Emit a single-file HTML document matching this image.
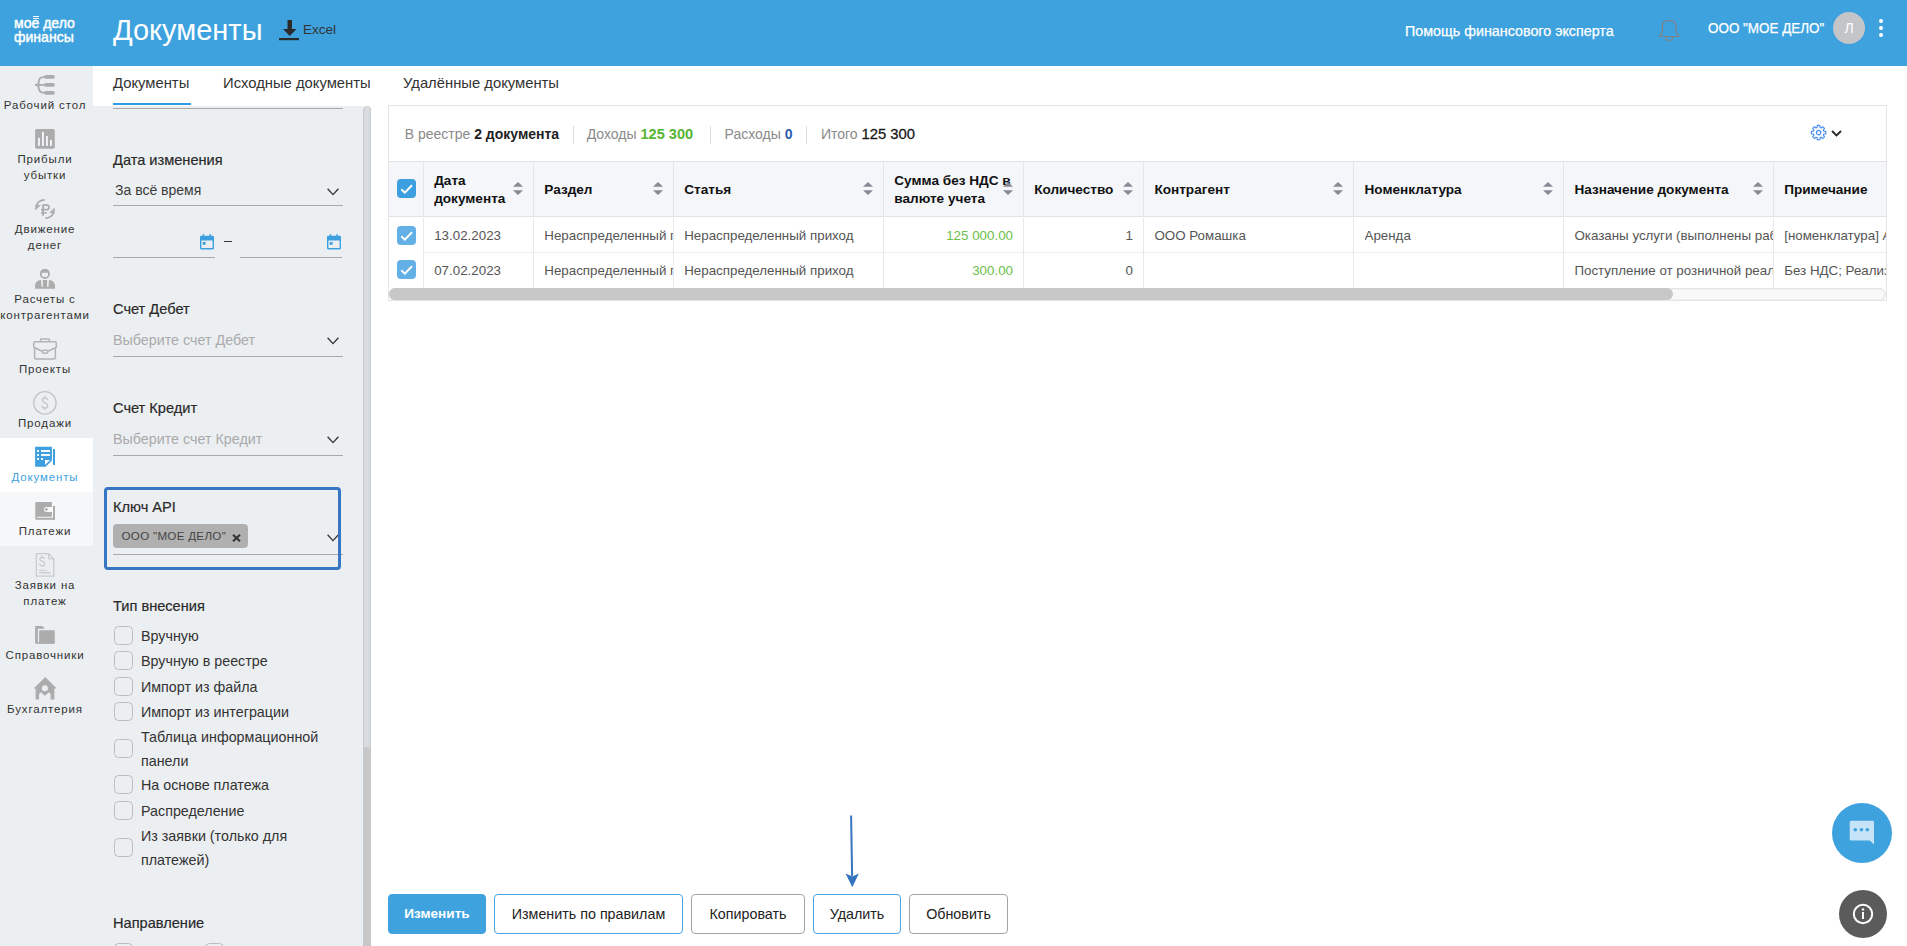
<!DOCTYPE html>
<html><head><meta charset="utf-8">
<style>
*{box-sizing:border-box;margin:0;padding:0}
html,body{width:1907px;height:946px;overflow:hidden;background:#fff;font-family:"Liberation Sans",sans-serif;color:#333}
.a{position:absolute}
.nw{white-space:nowrap}
#hdr{left:0;top:0;width:1907px;height:66px;background:#3ea2de}
#side{left:0;top:66px;width:93px;height:880px;background:#eceff2}
#tabs{left:93px;top:66px;width:1814px;height:40px;background:#fff}
#filt{left:93px;top:106px;width:278px;height:840px;background:linear-gradient(to right,#eceff2 270px,#fff 270px);overflow:hidden}
.logo{color:#fff;font-weight:400;font-size:15px;line-height:14px;transform-origin:0 0;transform:scaleX(.935);-webkit-text-stroke:.45px #fff}
.title{color:#fff;font-size:29px;line-height:34px}
.htxt{color:#fff;font-size:14.3px;line-height:18px;-webkit-text-stroke:.25px #fff}
/* sidebar */
.si{position:absolute;left:0;width:93px;text-align:center;font-size:11.5px;letter-spacing:.85px;line-height:16px;color:#333}
.si svg{position:absolute;left:31px;width:28px;height:28px}
.si.act{background:#fff;color:#3d9fe0}
.si.hov{background:#f6f7f9}
/* tabs */
.tab{position:absolute;top:0;height:40px;font-size:14.6px;line-height:18px;color:#333;padding-top:11px}
/* filter */
.lbl{position:absolute;left:20px;font-weight:400;font-size:14.6px;line-height:18px;color:#2a2a2a;-webkit-text-stroke:.2px #2a2a2a}
.sel{position:absolute;left:20px;width:230px;height:1px;background:#a9a9a9}
.ph{position:absolute;left:20px;font-size:14.3px;line-height:18px;color:#aaa}
.chev{position:absolute;width:12px;height:8px}
.cb{position:absolute;left:20.5px;width:19px;height:19px;border:1.7px solid #bdbdbd;border-radius:4.5px;background:transparent}
.ct{position:absolute;left:48px;font-size:14.3px;line-height:24px;color:#333}

#card{left:388px;top:105px;width:1499px;height:196px;border:1px solid #e4e4e4;overflow:hidden;background:#fff}
.sum{position:absolute;top:18.65px;font-size:14px;line-height:18px;color:#8a8a8a;white-space:nowrap}
.sum b{font-weight:700;color:#222}
.vs{position:absolute;top:20px;width:1px;height:17.5px;background:#dcdcdc}
.th{position:absolute;font-weight:700;font-size:13.6px;line-height:17.5px;color:#111;white-space:nowrap}
.td{position:absolute;font-size:13.35px;line-height:18px;color:#555;white-space:nowrap;overflow:hidden}
.vl{position:absolute;width:1px;background:#e6e8ec}
.srt{position:absolute;width:10px;height:13px}
.tcb{position:absolute;left:8px;width:19px;height:19px;border-radius:4px;background:#3d9fe0}
.tcb.l{background:#62b0e6}
.btn{position:absolute;top:894px;height:40px;border:1px solid #a3a3a3;border-radius:4px;background:#fff;font-size:14.3px;line-height:38px;color:#222;text-align:center;white-space:nowrap}
.btn.bl{border-color:#4aa6e0}
</style></head>
<body>
<div id="hdr" class="a">
  <div class="a logo nw" style="left:14px;top:16px">мое дело<br>финансы</div><div class="a" style="left:33px;top:16px;width:6px;height:1px;background:#fff"></div><div class="a" style="left:33px;top:18px;width:6px;height:1px;background:#fff"></div>
  <div class="a title nw" style="left:113px;top:13px">Документы</div>
  <svg class="a" style="left:279px;top:20px" width="21" height="21" viewBox="0 0 21 21">
    <rect x="8.5" y="0" width="4.5" height="10" fill="#2b2b2b"/>
    <path d="M4 9 L17.5 9 L10.75 16 Z" fill="#2b2b2b"/>
    <rect x="0" y="18" width="20" height="2.2" fill="#2b2b2b"/>
  </svg>
  <div class="a nw" style="left:303px;top:21px;font-size:13.5px;line-height:18px;color:#333">Excel</div>
  <div class="a htxt nw" style="left:1405px;top:22px">Помощь финансового эксперта</div>
  <svg class="a" style="left:1654px;top:16px" width="30" height="30" viewBox="0 0 30 30"><path d="M5.3 20.5 C7 18 8.4 16.5 8.4 14.5 V10.8 C8.4 7 10.8 4.4 15.15 4.4 C19.5 4.4 21.9 7 21.9 10.8 V14.5 C21.9 16.5 23.3 18 25 20.5 Z" fill="none" stroke="#7d8289" stroke-width="1.2" stroke-linejoin="round"/><path d="M11.4 20.8 C11.6 23.2 13.1 24.6 15.15 24.6 C17.2 24.6 18.7 23.2 18.9 20.8" fill="none" stroke="#7d8289" stroke-width="1.2"/></svg>
  <div class="a htxt nw" style="left:1708px;top:18.5px;font-size:14px;transform:scaleX(.96);transform-origin:0 0">ООО "МОЕ ДЕЛО"</div>
  <div class="a" style="left:1833px;top:12px;width:32px;height:32px;border-radius:50%;background:#c4c5c9;color:#fff;font-size:14px;line-height:32px;text-align:center">Л</div>
  <div class="a" style="left:1879px;top:19px;width:4.2px;height:4.2px;border-radius:50%;background:#fff"></div>
  <div class="a" style="left:1879px;top:26px;width:4.2px;height:4.2px;border-radius:50%;background:#fff"></div>
  <div class="a" style="left:1879px;top:33px;width:4.2px;height:4.2px;border-radius:50%;background:#fff"></div>
</div>
<div id="side" class="a">
<div class="si " style="top:0px;height:54px"><svg style="top:5px" viewBox="0 0 28 28"><g fill="#acacac"><rect x="13" y="4.1" width="10.8" height="3.6" rx="1.8"/><rect x="13" y="12.1" width="10.8" height="3.6" rx="1.8"/><rect x="13" y="20.1" width="10.8" height="3.6" rx="1.8"/></g>
<path d="M14 5.9 C9.6 5.9 7.7 7.6 7.7 11 L7.7 11.4 C7.7 13 6.6 13.9 4 13.9 C6.6 13.9 7.7 14.8 7.7 16.4 L7.7 16.8 C7.7 20.2 9.6 21.9 14 21.9 M4 13.9 H14" fill="none" stroke="#acacac" stroke-width="1.9"/></svg><div style="position:absolute;left:-1px;top:31px;width:92px">Рабочий стол</div></div>
<div class="si " style="top:54px;height:70px"><svg style="top:5px" viewBox="0 0 28 28"><rect x="4.1" y="4" width="19.7" height="19.7" rx="1.6" fill="#acacac"/><g fill="#f3f5f8"><rect x="7" y="12.7" width="1.9" height="8.2" rx=".6"/><rect x="11" y="6.8" width="1.9" height="14.1" rx=".6"/><rect x="15" y="11" width="1.9" height="9.9" rx=".6"/><rect x="19" y="14.8" width="1.9" height="6.1" rx=".6"/></g></svg><div style="position:absolute;left:-1px;top:31px;width:92px">Прибыли<br>убытки</div></div>
<div class="si " style="top:124px;height:70px"><svg style="top:5px" viewBox="0 0 28 28"><g fill="none" stroke="#acacac" stroke-width="1.8"><path d="M13.8 4.8 A9.3 9.3 0 0 0 5 11.5"/><path d="M14.2 23.2 A9.3 9.3 0 0 0 23 16.5"/><path d="M12.1 20.7 V10.1 H15.6 C17.3 10.1 18 11.2 18 12.4 C18 13.6 17.3 14.6 15.6 14.6 H10"/><path d="M10 17.9 H15.8" stroke-width="1.5"/></g>
<g fill="#acacac"><path d="M4.2 15.6 L4.5 9.4 L9.8 10.3 Z"/><path d="M23.8 12.4 L23.5 18.6 L18.2 17.7 Z"/></g></svg><div style="position:absolute;left:-1px;top:31px;width:92px">Движение<br>денег</div></div>
<div class="si " style="top:194px;height:70px"><svg style="top:5px" viewBox="0 0 28 28"><circle cx="13.9" cy="8.9" r="4.1" fill="none" stroke="#acacac" stroke-width="1.8"/><path d="M9.2 7.8 A4.9 4.9 0 0 1 18.6 7.8 Z" fill="#acacac"/>
<path d="M4 23.8 V21 C4 17.8 6.5 15 9.8 15 H18.2 C21.5 15 24 17.8 24 21 V23.8 Z" fill="#acacac"/>
<g stroke="#eceff2" stroke-width="1.7" fill="none"><path d="M10.9 14.5 L11.3 21.8"/><path d="M17.1 14.5 L16.7 21.8"/></g><g fill="#acacac"><rect x="12.1" y="15.1" width="3.7" height="1.6"/><path d="M12.7 17.1 H15.2 L16 22 H12 Z"/></g></svg><div style="position:absolute;left:-1px;top:31px;width:92px">Расчеты с<br>контрагентами</div></div>
<div class="si " style="top:264px;height:54px"><svg style="top:5px" viewBox="0 0 28 28"><g fill="none" stroke="#b3b3b3" stroke-width="1.5"><path d="M9.3 6.6 L9.9 4.1 H18 L18.7 6.6"/><path d="M4.2 6.8 H23.8 C24.8 6.8 25.3 7.4 25.3 8.2 V11.6 C25.3 12.2 25 12.6 24.4 12.8 L16.7 16.3 M11.3 16.3 L3.6 12.8 C3 12.6 2.7 12.2 2.7 11.6 V8.2 C2.7 7.4 3.2 6.8 4.2 6.8"/><path d="M3.6 12.8 V22.4 C3.6 23.3 4.2 23.9 5.1 23.9 H22.9 C23.8 23.9 24.4 23.3 24.4 22.4 V12.8"/><rect x="11.3" y="15.3" width="5.4" height="3" rx="1.2"/></g></svg><div style="position:absolute;left:-1px;top:31px;width:92px">Проекты</div></div>
<div class="si " style="top:318px;height:54px"><svg style="top:5px" viewBox="0 0 28 28"><g fill="none" stroke="#c2c4c6" stroke-width="1.3"><circle cx="13.9" cy="13.9" r="11.2"/><path d="M16.6 11 C16.3 9.6 15.3 8.8 13.9 8.8 C12.3 8.8 11.2 9.7 11.2 11.1 C11.2 14.4 16.7 13.2 16.7 16.6 C16.7 18.1 15.6 19.1 13.9 19.1 C12.3 19.1 11.2 18.2 11 16.6 M13.9 7.1 V8.8 M13.9 19.1 V20.7"/></g></svg><div style="position:absolute;left:-1px;top:31px;width:92px">Продажи</div></div>
<div class="si act" style="top:372px;height:54px"><svg style="top:5px" viewBox="0 0 28 28"><path d="M4.1 3.8 H20.9 V17.6 L14.7 23.8 H4.1 Z" fill="#3d9fe0"/><g fill="#fff"><rect x="6.1" y="7" width="1.9" height="1.9"/><rect x="10" y="7" width="9" height="1.9"/><rect x="6.1" y="11" width="1.9" height="1.9"/><rect x="10" y="11" width="9" height="1.9"/><rect x="6.1" y="15" width="1.9" height="1.9"/><rect x="10" y="15" width="2" height="1.9"/><path d="M14 17 H19 L14 22 Z"/></g><rect x="22" y="6.1" width="2" height="15.8" fill="#3d9fe0"/></svg><div style="position:absolute;left:-1px;top:31px;width:92px">Документы</div></div>
<div class="si hov" style="top:426px;height:54px"><svg style="top:5px" viewBox="0 0 28 28"><g fill="#acacac"><path d="M5.6 5 H20.9 V19.7 H5.9 V21.2 H4.3 V6.3 C4.3 5.6 4.9 5 5.6 5 Z"/><path d="M4.3 20.7 H24 V22.8 H5.6 C4.9 22.8 4.3 22.2 4.3 21.5 Z"/><rect x="22" y="8.9" width="2" height="13.9"/></g><path d="M21 9.9 H15.5 A2.5 2.5 0 0 0 15.5 14.9 H21 Z" fill="#f6f7f9"/><circle cx="15.4" cy="12.4" r="1.3" fill="#acacac"/></svg><div style="position:absolute;left:-1px;top:31px;width:92px">Платежи</div></div>
<div class="si " style="top:480px;height:70px"><svg style="top:5px" viewBox="0 0 28 28"><g fill="none" stroke="#c9cbce" stroke-width="1.3"><path d="M5.3 2.7 H17.6 L22.8 7.9 V25.1 H5.3 Z"/><path d="M17.6 2.7 V6.4 C17.6 7.3 18.2 7.9 19.1 7.9 H22.8"/><path d="M13.6 8 C13.3 6.9 12.4 6.3 11.1 6.3 C9.7 6.3 8.8 7.1 8.8 8.3 C8.8 11 13.7 9.9 13.7 12.7 C13.7 14 12.7 14.8 11.1 14.8 C9.7 14.8 8.6 14 8.3 12.7 M11.1 4.4 V6.3 M11.1 14.8 V16.1"/><path d="M8 19.4 H16" stroke-width=".9"/><path d="M8 21.7 H19.8" stroke-width="1.4"/></g></svg><div style="position:absolute;left:-1px;top:31px;width:92px">Заявки на<br>платеж</div></div>
<div class="si " style="top:550px;height:54px"><svg style="top:5px" viewBox="0 0 28 28"><g fill="#acacac"><path d="M4.1 5 H11.2 L13.9 7.7 H6.9 V21.5 H4.1 Z"/><rect x="8.1" y="9.2" width="15.7" height="13.6" rx="1.3"/><path d="M4.1 21 H23.8 V21.5 C23.8 22.2 23.2 22.8 22.5 22.8 H5.4 C4.7 22.8 4.1 22.2 4.1 21.5 Z"/></g></svg><div style="position:absolute;left:-1px;top:31px;width:92px">Справочники</div></div>
<div class="si " style="top:604px;height:54px"><svg style="top:5px" viewBox="0 0 28 28"><path d="M2.7 13.6 L14.2 2.1 L25.7 13.6 H23.4 V24.6 H19.6 V20.2 C19.6 18.6 18.8 17.5 17.6 17.5 L13.9 20.8 L10.2 17.5 C9 17.5 8.1 18.6 8.1 20.2 V24.6 H4.6 V13.6 Z" fill="#acacac"/><circle cx="13.9" cy="13.3" r="3" fill="#eceff2"/></svg><div style="position:absolute;left:-1px;top:31px;width:92px">Бухгалтерия</div></div>
</div>
<div id="tabs" class="a">
  <div class="a nw" style="left:20px;top:8px;font-size:14.8px;line-height:18px;color:#333">Документы</div>
  <div class="a nw" style="left:130px;top:8px;font-size:14.8px;line-height:18px;color:#333">Исходные документы</div>
  <div class="a nw" style="left:310px;top:8px;font-size:14.8px;line-height:18px;color:#333">Удалённые документы</div>
  <div class="a" style="left:20px;top:37px;width:78px;height:2px;background:#2f9be0"></div>
</div>
<div id="filt" class="a">
  <div class="a" style="left:20px;top:2px;width:230px;height:1px;background:#a9a9a9"></div>
  <div class="lbl nw" style="top:45.25px">Дата изменения</div>
  <div class="a nw" style="left:22px;top:75px;font-size:14px;line-height:18px;color:#3a3a3a">За всё время</div>
  <svg class="a" style="left:234px;top:81.5px" width="12" height="8" viewBox="0 0 12 8"><path d="M.6 .8 L6 6.6 L11.4 .8" fill="none" stroke="#333" stroke-width="1.3"/></svg>
  <div class="sel" style="top:99px"></div>
  <svg class="a" style="left:106px;top:128px" width="16" height="16" viewBox="0 0 16 16"><path d="M2.3 1.7 H13.7 C14.5 1.7 15 2.3 15 3 V14.1 C15 14.9 14.5 15.4 13.7 15.4 H2.3 C1.5 15.4 1 14.9 1 14.1 V3 C1 2.3 1.5 1.7 2.3 1.7 Z M2.4 6.5 V13.9 H13.6 V6.5 Z" fill="#3d9fe0" fill-rule="evenodd"/><rect x="3.7" y="0" width="1.4" height="2.5" rx=".6" fill="#3d9fe0"/><rect x="10.4" y="0" width="1.4" height="2.5" rx=".6" fill="#3d9fe0"/><rect x="3.7" y="8" width="2.9" height="2.8" fill="#3d9fe0"/></svg>
  <div class="a" style="left:130.5px;top:134.5px;width:8.5px;height:1.6px;background:#333"></div>
  <svg class="a" style="left:233px;top:128px" width="16" height="16" viewBox="0 0 16 16"><path d="M2.3 1.7 H13.7 C14.5 1.7 15 2.3 15 3 V14.1 C15 14.9 14.5 15.4 13.7 15.4 H2.3 C1.5 15.4 1 14.9 1 14.1 V3 C1 2.3 1.5 1.7 2.3 1.7 Z M2.4 6.5 V13.9 H13.6 V6.5 Z" fill="#3d9fe0" fill-rule="evenodd"/><rect x="3.7" y="0" width="1.4" height="2.5" rx=".6" fill="#3d9fe0"/><rect x="10.4" y="0" width="1.4" height="2.5" rx=".6" fill="#3d9fe0"/><rect x="3.7" y="8" width="2.9" height="2.8" fill="#3d9fe0"/></svg>
  <div class="a" style="left:20px;top:151px;width:102px;height:1px;background:#a9a9a9"></div>
  <div class="a" style="left:147px;top:151px;width:102px;height:1px;background:#a9a9a9"></div>
  <div class="lbl nw" style="top:194.35px">Счет Дебет</div>
  <div class="ph nw" style="top:225.35px">Выберите счет Дебет</div>
  <svg class="a" style="left:234px;top:230.5px" width="12" height="8" viewBox="0 0 12 8"><path d="M.6 .8 L6 6.6 L11.4 .8" fill="none" stroke="#333" stroke-width="1.3"/></svg>
  <div class="sel" style="top:250px"></div>
  <div class="lbl nw" style="top:292.85px">Счет Кредит</div>
  <div class="ph nw" style="top:323.85px">Выберите счет Кредит</div>
  <svg class="a" style="left:234px;top:329.5px" width="12" height="8" viewBox="0 0 12 8"><path d="M.6 .8 L6 6.6 L11.4 .8" fill="none" stroke="#333" stroke-width="1.3"/></svg>
  <div class="sel" style="top:349px"></div>
  <div class="lbl nw" style="top:392px">Ключ API</div>
  <div class="a" style="left:20px;top:418px;width:135px;height:24px;background:#b0b0b0;border-radius:4px"></div>
  <div class="a nw" style="left:28.5px;top:422px;font-size:11.6px;letter-spacing:.3px;line-height:16px;color:#444">ООО "МОЕ ДЕЛО"</div>
  <svg class="a" style="left:138.5px;top:428px" width="9" height="8" viewBox="0 0 9 8"><path d="M1 .7 L8 7.3 M8 .7 L1 7.3" stroke="#333" stroke-width="2"/></svg>
  <svg class="a" style="left:234px;top:428.3px" width="12" height="8" viewBox="0 0 12 8"><path d="M.6 .8 L6 6.6 L11.4 .8" fill="none" stroke="#333" stroke-width="1.3"/></svg>
  <div class="a" style="left:20px;top:448px;width:230px;height:1px;background:#a9a9a9"></div>
  <div class="a" style="left:11px;top:381px;width:237px;height:83px;border:3px solid #3676c2;border-radius:4px"></div>
  <div class="lbl nw" style="top:491.35px">Тип внесения</div>
  <div class="cb" style="top:520.1px"></div><div class="cb" style="top:545.1px"></div><div class="cb" style="top:570.9px"></div><div class="cb" style="top:596.1px"></div><div class="cb" style="top:632.9px"></div><div class="cb" style="top:669.0px"></div><div class="cb" style="top:695.0px"></div><div class="cb" style="top:731.9px"></div>
  <div class="ct nw" style="top:517.85px">Вручную</div><div class="ct nw" style="top:542.85px">Вручную в реестре</div><div class="ct nw" style="top:568.65px">Импорт из файла</div><div class="ct nw" style="top:593.85px">Импорт из интеграции</div><div class="ct nw" style="top:619.05px">Таблица информационной<br>панели</div><div class="ct nw" style="top:666.75px">На основе платежа</div><div class="ct nw" style="top:693.15px">Распределение</div><div class="ct nw" style="top:717.95px">Из заявки (только для<br>платежей)</div>
  <div class="lbl nw" style="top:808.15px">Направление</div>
  <div class="cb" style="top:837.4px;left:21px"></div>
  <div class="cb" style="top:837.4px;left:112px"></div>
  <div class="a" style="left:270px;top:0;width:8px;height:840px;background:#d8dbdf;border-radius:4px;box-shadow:inset 1px 0 1px rgba(0,0,0,.08),inset -1px 0 1px rgba(0,0,0,.08)"></div>
  <div class="a" style="left:270px;top:641px;width:8px;height:220px;background:#c8c8c8;border-radius:4px"></div>
</div>
<div id="card" class="a">
<div class="sum" style="left:15.7px">В реестре <b>2 документа</b></div>
<div class="vs" style="left:183.5px"></div>
<div class="sum" style="left:197.7px">Доходы <b style="color:#56b533;font-size:14.6px">125 300</b></div>
<div class="vs" style="left:320.5px"></div>
<div class="sum" style="left:335.6px">Расходы <b style="color:#2a5db0">0</b></div>
<div class="vs" style="left:416.5px"></div>
<div class="sum" style="left:431.9px">Итого <b style="font-weight:400;color:#1a1a1a;font-size:14.8px;-webkit-text-stroke:.3px #1a1a1a">125 300</b></div>
<svg class="a" style="left:1420.5px;top:17.799999999999997px" width="18" height="18" viewBox="0 0 18 18"><path d="M7.14 3.51 L7.34 1.46 A7.25 7.25 0 0 1 9.86 1.46 L10.06 3.51 A5.3 5.3 0 0 1 11.17 3.96 L12.76 2.66 A7.25 7.25 0 0 1 14.54 4.44 L13.24 6.03 A5.3 5.3 0 0 1 13.69 7.14 L15.74 7.34 A7.25 7.25 0 0 1 15.74 9.86 L13.69 10.06 A5.3 5.3 0 0 1 13.24 11.17 L14.54 12.76 A7.25 7.25 0 0 1 12.76 14.54 L11.17 13.24 A5.3 5.3 0 0 1 10.06 13.69 L9.86 15.74 A7.25 7.25 0 0 1 7.34 15.74 L7.14 13.69 A5.3 5.3 0 0 1 6.03 13.24 L4.44 14.54 A7.25 7.25 0 0 1 2.66 12.76 L3.96 11.17 A5.3 5.3 0 0 1 3.51 10.06 L1.46 9.86 A7.25 7.25 0 0 1 1.46 7.34 L3.51 7.14 A5.3 5.3 0 0 1 3.96 6.03 L2.66 4.44 A7.25 7.25 0 0 1 4.44 2.66 L6.03 3.96 A5.3 5.3 0 0 1 7.14 3.51 Z" fill="none" stroke="#4b8ff0" stroke-width="1.2" stroke-linejoin="round"/><circle cx="8.6" cy="8.6" r="2.2" fill="none" stroke="#4b8ff0" stroke-width="1.2"/></svg>
<svg class="a" style="left:1441.5px;top:23.5px" width="11" height="7" viewBox="0 0 11 7"><path d="M1 1 L5.5 5.5 L10 1" fill="none" stroke="#2a2a2a" stroke-width="1.9"/></svg>
<div class="a" style="left:0;top:55px;width:1497px;height:1px;background:#e0e2e6"></div>
<div class="a" style="left:0;top:56px;width:1497px;height:54px;background:#f4f6fa"></div>
<div class="a" style="left:0;top:110px;width:1497px;height:1px;background:#e0e2e6"></div>
<div class="a" style="left:34px;top:146px;width:1500px;height:1px;background:#ebedf0"></div>
<div class="vl" style="left:34px;top:56px;height:54px;background:#e3e5e9"></div>
<div class="vl" style="left:34px;top:112px;height:70px"></div>
<div class="vl" style="left:144px;top:56px;height:54px;background:#e3e5e9"></div>
<div class="vl" style="left:144px;top:112px;height:70px"></div>
<div class="vl" style="left:284px;top:56px;height:54px;background:#e3e5e9"></div>
<div class="vl" style="left:284px;top:112px;height:70px"></div>
<div class="vl" style="left:494px;top:56px;height:54px;background:#e3e5e9"></div>
<div class="vl" style="left:494px;top:112px;height:70px"></div>
<div class="vl" style="left:634px;top:56px;height:54px;background:#e3e5e9"></div>
<div class="vl" style="left:634px;top:112px;height:70px"></div>
<div class="vl" style="left:754px;top:56px;height:54px;background:#e3e5e9"></div>
<div class="vl" style="left:754px;top:112px;height:70px"></div>
<div class="vl" style="left:964px;top:56px;height:54px;background:#e3e5e9"></div>
<div class="vl" style="left:964px;top:112px;height:70px"></div>
<div class="vl" style="left:1174px;top:56px;height:54px;background:#e3e5e9"></div>
<div class="vl" style="left:1174px;top:112px;height:70px"></div>
<div class="vl" style="left:1384px;top:56px;height:54px;background:#e3e5e9"></div>
<div class="vl" style="left:1384px;top:112px;height:70px"></div>
<div class="tcb" style="top:73.3px"><svg width="19" height="19" viewBox="0 0 19 19" style="position:absolute;left:0;top:0"><path d="M4.3 10.2 L7.8 13.6 L15 6.3" fill="none" stroke="#fff" stroke-width="2"/></svg></div>
<div class="tcb l" style="top:119.6px"><svg width="19" height="19" viewBox="0 0 19 19" style="position:absolute;left:0;top:0"><path d="M4.3 10.2 L7.8 13.6 L15 6.3" fill="none" stroke="#fff" stroke-width="2"/></svg></div>
<div class="tcb l" style="top:154.4px"><svg width="19" height="19" viewBox="0 0 19 19" style="position:absolute;left:0;top:0"><path d="M4.3 10.2 L7.8 13.6 L15 6.3" fill="none" stroke="#fff" stroke-width="2"/></svg></div>
<div class="th" style="left:45.2px;top:66.3px">Дата<br>документа</div>
<svg class="srt" style="left:124.1px;top:76.1px" viewBox="0 0 10 13"><path d="M0 4.8 L5 0 L10 4.8 Z M0 8.2 L10 8.2 L5 13 Z" fill="#868a94"/></svg>
<div class="th" style="left:155.3px;top:75.04px">Раздел</div>
<svg class="srt" style="left:264px;top:76.1px" viewBox="0 0 10 13"><path d="M0 4.8 L5 0 L10 4.8 Z M0 8.2 L10 8.2 L5 13 Z" fill="#868a94"/></svg>
<div class="th" style="left:295.2px;top:75.04px">Статья</div>
<svg class="srt" style="left:474px;top:76.1px" viewBox="0 0 10 13"><path d="M0 4.8 L5 0 L10 4.8 Z M0 8.2 L10 8.2 L5 13 Z" fill="#868a94"/></svg>
<div class="th" style="left:505.3px;top:66.3px">Сумма без НДС в<br>валюте учета</div>
<svg class="srt" style="left:614.2px;top:76.1px" viewBox="0 0 10 13"><path d="M0 4.8 L5 0 L10 4.8 Z M0 8.2 L10 8.2 L5 13 Z" fill="#868a94"/></svg>
<div class="th" style="left:645.2px;top:75.04px">Количество</div>
<svg class="srt" style="left:734px;top:76.1px" viewBox="0 0 10 13"><path d="M0 4.8 L5 0 L10 4.8 Z M0 8.2 L10 8.2 L5 13 Z" fill="#868a94"/></svg>
<div class="th" style="left:765.4px;top:75.04px">Контрагент</div>
<svg class="srt" style="left:943.6px;top:76.1px" viewBox="0 0 10 13"><path d="M0 4.8 L5 0 L10 4.8 Z M0 8.2 L10 8.2 L5 13 Z" fill="#868a94"/></svg>
<div class="th" style="left:975.5px;top:75.04px">Номенклатура</div>
<svg class="srt" style="left:1153.6px;top:76.1px" viewBox="0 0 10 13"><path d="M0 4.8 L5 0 L10 4.8 Z M0 8.2 L10 8.2 L5 13 Z" fill="#868a94"/></svg>
<div class="th" style="left:1185.4px;top:75.04px">Назначение документа</div>
<svg class="srt" style="left:1363.6px;top:76.1px" viewBox="0 0 10 13"><path d="M0 4.8 L5 0 L10 4.8 Z M0 8.2 L10 8.2 L5 13 Z" fill="#868a94"/></svg>
<div class="th" style="left:1395.2px;top:75.04px">Примечание</div>
<div class="td" style="left:45.2px;top:121.46px;width:98px">13.02.2023</div>
<div class="td" style="left:155.3px;top:121.46px;width:129px">Нераспределенный приход</div>
<div class="td" style="left:295.2px;top:121.46px;width:190px">Нераспределенный приход</div>
<div class="td" style="left:495px;top:121.46px;width:129px;text-align:right;color:#6cc04a">125 000.00</div>
<div class="td" style="left:635px;top:121.46px;width:109px;text-align:right">1</div>
<div class="td" style="left:765.4px;top:121.46px;width:190px">ООО Ромашка</div>
<div class="td" style="left:975.5px;top:121.46px;width:190px">Аренда</div>
<div class="td" style="left:1185.4px;top:121.46px;width:199px">Оказаны услуги (выполнены работы)</div>
<div class="td" style="left:1395.2px;top:121.46px;width:200px">[номенклатура] Аренда</div>
<div class="td" style="left:45.2px;top:156.36px;width:98px">07.02.2023</div>
<div class="td" style="left:155.3px;top:156.36px;width:129px">Нераспределенный приход</div>
<div class="td" style="left:295.2px;top:156.36px;width:190px">Нераспределенный приход</div>
<div class="td" style="left:495px;top:156.36px;width:129px;text-align:right;color:#6cc04a">300.00</div>
<div class="td" style="left:635px;top:156.36px;width:109px;text-align:right">0</div>
<div class="td" style="left:765.4px;top:156.36px;width:190px"></div>
<div class="td" style="left:975.5px;top:156.36px;width:190px"></div>
<div class="td" style="left:1185.4px;top:156.36px;width:199px">Поступление от розничной реализации</div>
<div class="td" style="left:1395.2px;top:156.36px;width:200px">Без НДС; Реализация</div>
<div class="a" style="left:0;top:181.5px;width:1497px;height:13px;border-radius:6.5px;background:#f9f9f9;box-shadow:inset 0 0 2px 1px #dedede"></div>
<div class="a" style="left:0;top:182px;width:1283.6px;height:12px;border-radius:6px;background:#c8c8c8"></div>
</div>
<div class="btn" style="left:388px;width:98px;background:#3ea2de;border-color:#3ea2de;color:#fff;font-weight:700;font-size:13.6px">Изменить</div>
<div class="btn bl" style="left:494px;width:189px">Изменить по правилам</div>
<div class="btn" style="left:691px;width:114px">Копировать</div>
<div class="btn bl" style="left:813px;width:88px">Удалить</div>
<div class="btn" style="left:909px;width:99px">Обновить</div>
<svg class="a" style="left:840px;top:810px" width="25" height="80" viewBox="0 0 25 80"><path d="M11.1 5.4 L12.1 66" stroke="#3575c0" stroke-width="2" fill="none"/><path d="M5.6 63.4 L12.3 66.6 L18.9 63.4 L12.3 77.2 Z" fill="#3575c0"/></svg>
<div class="a" style="left:1832px;top:803px;width:60px;height:60px;border-radius:50%;background:#3ea2de"></div>
<svg class="a" style="left:1849px;top:820px" width="26" height="26" viewBox="0 0 26 26"><path d="M2.2 .8 H23.5 C24.3 .8 25 1.5 25 2.3 V24.5 L20.8 20.5 H2.2 C1.4 20.5 .7 19.8 .7 19 V2.3 C.7 1.5 1.4 .8 2.2 .8 Z" fill="#c6e4f7"/><circle cx="6.3" cy="9.8" r="1.8" fill="#3ea2de"/><circle cx="12.4" cy="9.8" r="1.8" fill="#3ea2de"/><circle cx="18.3" cy="9.8" r="1.8" fill="#3ea2de"/></svg>
<div class="a" style="left:1839px;top:890px;width:48px;height:48px;border-radius:50%;background:#5b5b5b"></div>
<svg class="a" style="left:1851px;top:902px" width="24" height="24" viewBox="0 0 24 24"><circle cx="12" cy="12" r="9.2" fill="none" stroke="#fff" stroke-width="2"/><rect x="11" y="10" width="2" height="7" fill="#fff"/><circle cx="12" cy="7.4" r="1.2" fill="#fff"/></svg>
</body></html>
